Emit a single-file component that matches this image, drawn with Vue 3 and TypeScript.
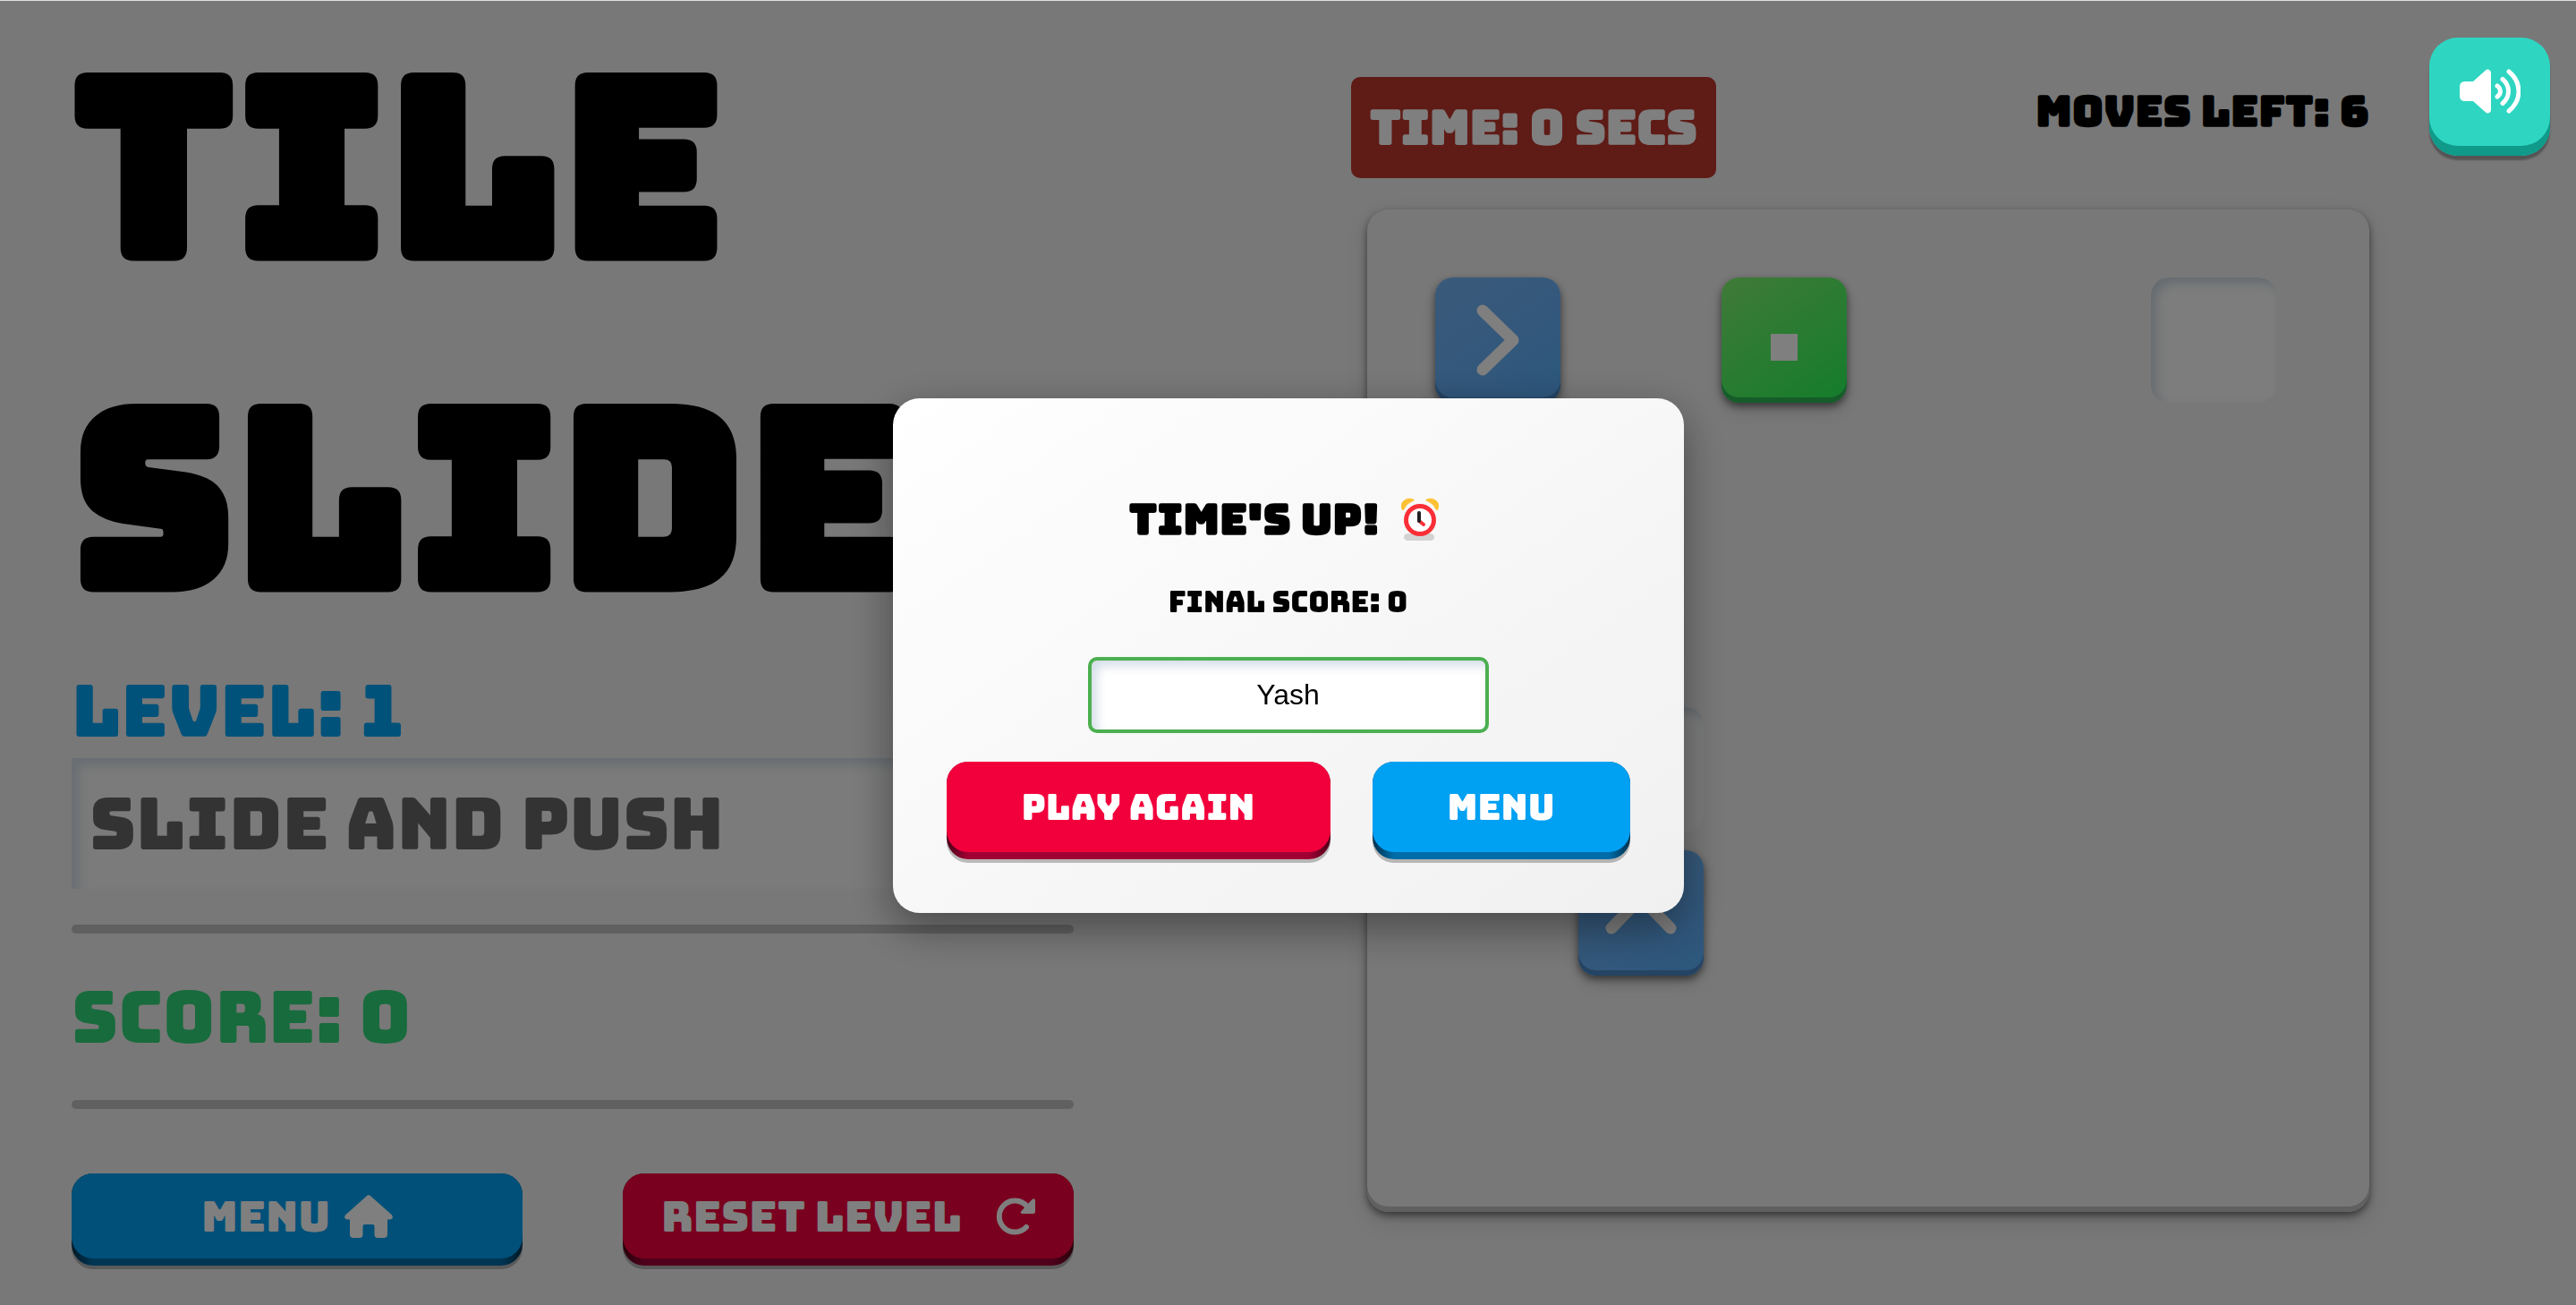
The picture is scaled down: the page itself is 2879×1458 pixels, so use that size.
<script setup lang="ts">
import { ref } from 'vue'

type TileKind = 'right' | 'up' | 'stop' | 'slot'

interface Tile {
  id: number
  kind: TileKind
  row: number
  col: number
}

const level = ref(1)
const score = ref(0)
const secondsLeft = ref(0)
const movesLeft = ref(6)
const playerName = ref('Yash')

const tiles = ref<Tile[]>([
  { id: 1, kind: 'right', row: 1, col: 1 },
  { id: 2, kind: 'stop', row: 1, col: 3 },
  { id: 3, kind: 'slot', row: 1, col: 6 },
  { id: 4, kind: 'slot', row: 4, col: 2 },
  { id: 5, kind: 'up', row: 5, col: 2 },
])

const tileLabels: Record<TileKind, string> = {
  right: 'Slide right',
  up: 'Slide up',
  stop: 'Fixed tile',
  slot: 'Target',
}
</script>

<template>
  <div class="page">
    <main class="game">
      <section class="info">
        <h1 class="title"><span>TILE</span> <span>SLIDE</span></h1>
        <h2 class="stat level">LEVEL: {{ level }}</h2>
        <p class="hint">SLIDE AND PUSH</p>
        <hr class="rule" />
        <h2 class="stat score">SCORE: {{ score }}</h2>
        <hr class="rule" />
        <div class="actions">
          <button type="button" class="btn blue">
            <span class="face">
              MENU
              <svg class="home" viewBox="0 0 54 48" aria-hidden="true">
                <path d="M24.500 1.500Q27-.8 29.500 1.500L52.500 22Q54.500 24 53.500 26Q52.500 27.500 50 27.500H48V44Q48 48 44 48H37Q33.500 48 33.500 44V35Q33.500 33 31.500 33H22.500Q20.500 33 20.500 35V44Q20.500 48 17 48H10Q6 48 6 44V27.500H4Q1.500 27.500.5 26Q-.5 24 1.500 22Z" />
              </svg>
            </span>
          </button>
          <button type="button" class="btn red">
            <span class="face spread">
              RESET LEVEL
              <svg class="redo" viewBox="0 0 44 42" aria-hidden="true">
                <path class="line" d="M34 33A17.500 17.500 0 1 1 34.500 9.500L38 13" />
                <path d="M41 1.500Q44 .5 44 3.500V16Q44 18 42 18H29.500Q26.500 17.500 28.500 15Z" />
              </svg>
            </span>
          </button>
        </div>
      </section>

      <section class="play">
        <header class="status">
          <div class="timer">TIME: {{ secondsLeft }} SECS</div>
          <div class="moves">MOVES LEFT: {{ movesLeft }}</div>
        </header>
        <div class="board">
          <button
            v-for="tile in tiles"
            :key="tile.id"
            type="button"
            class="tile"
            :class="tile.kind"
            :aria-label="tileLabels[tile.kind]"
            :style="{ gridRow: tile.row, gridColumn: tile.col }"
          >
            <svg v-if="tile.kind === 'right'" viewBox="0 0 140 140" aria-hidden="true">
              <path class="chevron" d="M53 37L87 70L53 103" />
            </svg>
            <svg v-else-if="tile.kind === 'up'" viewBox="0 0 140 140" aria-hidden="true">
              <path class="chevron" d="M37 87L70 53L103 87" />
            </svg>
            <svg v-else-if="tile.kind === 'stop'" viewBox="0 0 140 140" aria-hidden="true">
              <rect x="55" y="63" width="30" height="30" fill="#fff" />
            </svg>
          </button>
        </div>
      </section>
    </main>

    <div class="overlay">
      <div class="modal" role="dialog" aria-modal="true" aria-labelledby="result-title">
        <h2 id="result-title" class="modal-title">
          TIME'S UP!
          <svg class="clock" viewBox="0 0 44 48" role="img" aria-label="Alarm clock">
            <path d="M8 40H34Q38 41 38 44Q38 48 34 48H8Q4 47.500 4 44Q4 41 8 40Z" fill="#d3d3d3" />
            <path d="M2 13.500Q-1 7 4 3Q9-1 15 2Q16.500 3 14 4Q7 7 4.500 13Q3 15 2 13.500ZM42 13.500Q45 7 40 3Q35-1 29 2Q27.500 3 30 4Q37 7 39.500 13Q41 15 42 13.500Z" fill="#fcc234" />
            <circle cx="22" cy="25" r="15.500" fill="#fff" stroke="#f92f37" stroke-width="5" />
            <path d="M21 26L26 30" stroke="#f92f37" stroke-width="4" stroke-linecap="round" />
            <path d="M21 17V26" stroke="#212121" stroke-width="4" stroke-linecap="round" />
          </svg>
        </h2>
        <p class="final">FINAL SCORE: {{ score }}</p>
        <input v-model="playerName" class="name" type="text" aria-label="Player name" />
        <div class="modal-actions">
          <button type="button" class="btn red again"><span class="face">PLAY AGAIN</span></button>
          <button type="button" class="btn blue"><span class="face">MENU</span></button>
        </div>
      </div>
    </div>

    <button type="button" class="sound" aria-label="Toggle sound">
      <svg viewBox="0 0 68 50" aria-hidden="true">
        <path d="M6 14H15L29 1.500Q31 0 33 1Q35 2 35 4.500V45.500Q35 48 33 49Q31 50 29 48.500L15 36H6Q0 36 0 30V20Q0 14 6 14Z" fill="#fff" />
        <path d="M42 19Q45.500 21.500 45.500 25T42 31M48 11.500Q54.500 17 54.500 25T48 38.500M55 3Q66 12 66 25T55 47" fill="none" stroke="#fff" stroke-width="5" stroke-linecap="round" />
      </svg>
    </button>
  </div>
</template>

<style>
body {
  margin: 0;
  background: #f0f0f0;
}
</style>

<style scoped>
.page {
  min-height: 100vh;
  box-sizing: border-box;
  border-top: 1px solid #dde3e0;
  background: #f0f0f0;
  color: #000;
  font-family: Bungee, Inter, "Liberation Sans", sans-serif;
}

h1,
h2,
p {
  margin: 0;
}

.game {
  display: grid;
  grid-template-columns: minmax(0, 1fr) minmax(0, 1fr);
  column-gap: 328px;
  padding: 0 231px 0 80px;
}

.title {
  font-size: 280px;
  line-height: 370px;
  font-weight: 700;
}

.title span {
  display: block;
}

.stat {
  font-size: 80px;
  line-height: 106px;
  font-weight: 400;
}

.level {
  color: #00a4f4;
}

.hint {
  padding: 20px;
  font-size: 80px;
  line-height: 106px;
  color: #666;
  background: #f6f6f6;
  box-shadow: inset 8px 8px 12px #d2dce6;
}

.rule {
  height: 10px;
  margin: 40px 0;
  border: 0;
  border-radius: 5px;
  background: #c0c0c0;
}

.score {
  color: #30d678;
}

.actions {
  display: grid;
  grid-template-columns: 1fr 1fr;
  gap: 112px;
  padding-top: 32px;
}

.btn {
  display: flex;
  padding: 0 0 8px;
  border: 0;
  border-radius: 24px;
  box-shadow: 0 4px 0 rgba(0, 0, 0, 0.25);
  font: inherit;
  font-size: 48px;
  color: #fff;
  cursor: pointer;
}

.face {
  flex: 1;
  display: flex;
  align-items: center;
  justify-content: center;
  gap: 16px;
  height: 95px;
  border-radius: 24px;
  white-space: nowrap;
}

.face.spread {
  gap: 38px;
}

.blue {
  background: linear-gradient(to right, #00304c, #006ca8 24px, #006ca8 calc(100% - 24px), #00304c);
}

.blue .face {
  background: #00a0f2;
}

.red {
  background: linear-gradient(to right, #4c0018, #a00034 24px, #a00034 calc(100% - 24px), #4c0018);
}

.red .face {
  background: #f2003c;
}

.home {
  width: 54px;
  height: 48px;
  fill: #fff;
}

.redo {
  width: 44px;
  height: 42px;
  fill: #fff;
}

.redo .line {
  fill: none;
  stroke: #fff;
  stroke-width: 6px;
  stroke-linecap: round;
}

.status {
  display: flex;
  justify-content: space-between;
  align-items: flex-start;
  margin: 85px 0 35px -18px;
  font-weight: 700;
}

.timer {
  padding: 0 21px;
  border-radius: 10px;
  background: #be362c;
  color: #fff;
  font-size: 53px;
  line-height: 113px;
}

.moves {
  font-size: 48px;
  line-height: 76px;
}

.board {
  display: grid;
  grid-template-columns: repeat(6, minmax(0, 1fr));
  grid-template-rows: repeat(6, minmax(0, 1fr));
  gap: 20px;
  aspect-ratio: 1;
  box-sizing: border-box;
  padding: 76px 104px 104px 76px;
  border-radius: 24px;
  background: #f1f1f1;
  box-shadow: inset 0 -6px 0 #c0c0c0, 0 4px 8px rgba(0, 0, 0, 0.5), 0 10px 26px rgba(0, 0, 0, 0.12);
}

.tile {
  padding: 0;
  border: 0;
  border-radius: 20px;
}

.tile svg {
  display: block;
  width: 100%;
  height: 100%;
}

.right,
.up {
  background: linear-gradient(145deg, #76b4f4, #5aaefa);
  box-shadow: inset 0 -6px 0 #4a88c8, 0 4px 8px rgba(0, 0, 0, 0.5), 0 10px 20px rgba(0, 0, 0, 0.12);
}

.stop {
  background: linear-gradient(145deg, #80f470, #28fa58);
  box-shadow: inset 0 -6px 0 #2cb854, 0 4px 8px rgba(0, 0, 0, 0.5), 0 10px 20px rgba(0, 0, 0, 0.12);
}

.slot {
  background: #fafafa;
  box-shadow: inset 6px 6px 12px #cad6e0;
}

.chevron {
  fill: none;
  stroke: #fff;
  stroke-width: 13px;
  stroke-linecap: round;
  stroke-linejoin: round;
}

.overlay {
  position: fixed;
  inset: 1px 0 0;
  display: flex;
  align-items: center;
  justify-content: center;
  padding-top: 5px;
  background: rgba(0, 0, 0, 0.5);
}

.modal {
  display: flex;
  flex-direction: column;
  align-items: center;
  padding: 92px 60px 60px;
  border-radius: 30px;
  background: linear-gradient(145deg, #fff, #f0f0f0);
  box-shadow: 0 16px 48px rgba(0, 0, 0, 0.4);
}

.modal-title {
  display: flex;
  align-items: center;
  gap: 23px;
  padding-right: 8px;
  font-size: 48px;
  line-height: 86px;
  font-weight: 700;
}

.clock {
  width: 44px;
  height: 48px;
}

.final {
  margin: 30px 0 41px;
  font-size: 32px;
  line-height: 40px;
}

.name {
  width: 448px;
  height: 85px;
  box-sizing: border-box;
  margin-bottom: 32px;
  border: 4px solid #4caf50;
  border-radius: 10px;
  background: #fff;
  box-shadow: inset 6px 6px 12px #d4dee8;
  color: #000;
  font-family: "Liberation Sans", Arial, sans-serif;
  font-size: 32px;
  text-align: center;
}

.modal-actions {
  display: grid;
  grid-template-columns: 429px 288px;
  gap: 47px;
}

.modal-actions .btn {
  font-size: 40px;
}

.modal-actions .face {
  height: 101px;
}

.sound {
  position: fixed;
  top: 42px;
  right: 29px;
  display: flex;
  align-items: center;
  justify-content: center;
  width: 135px;
  height: 132px;
  padding: 0 0 12px;
  border: 0;
  border-radius: 32px;
  background: #2ed6c2;
  box-shadow: inset 0 -11px 0 #0f9a8a, 0 5px 2px rgba(0, 0, 0, 0.3);
}

.sound svg {
  width: 68px;
  height: 50px;
}
</style>
